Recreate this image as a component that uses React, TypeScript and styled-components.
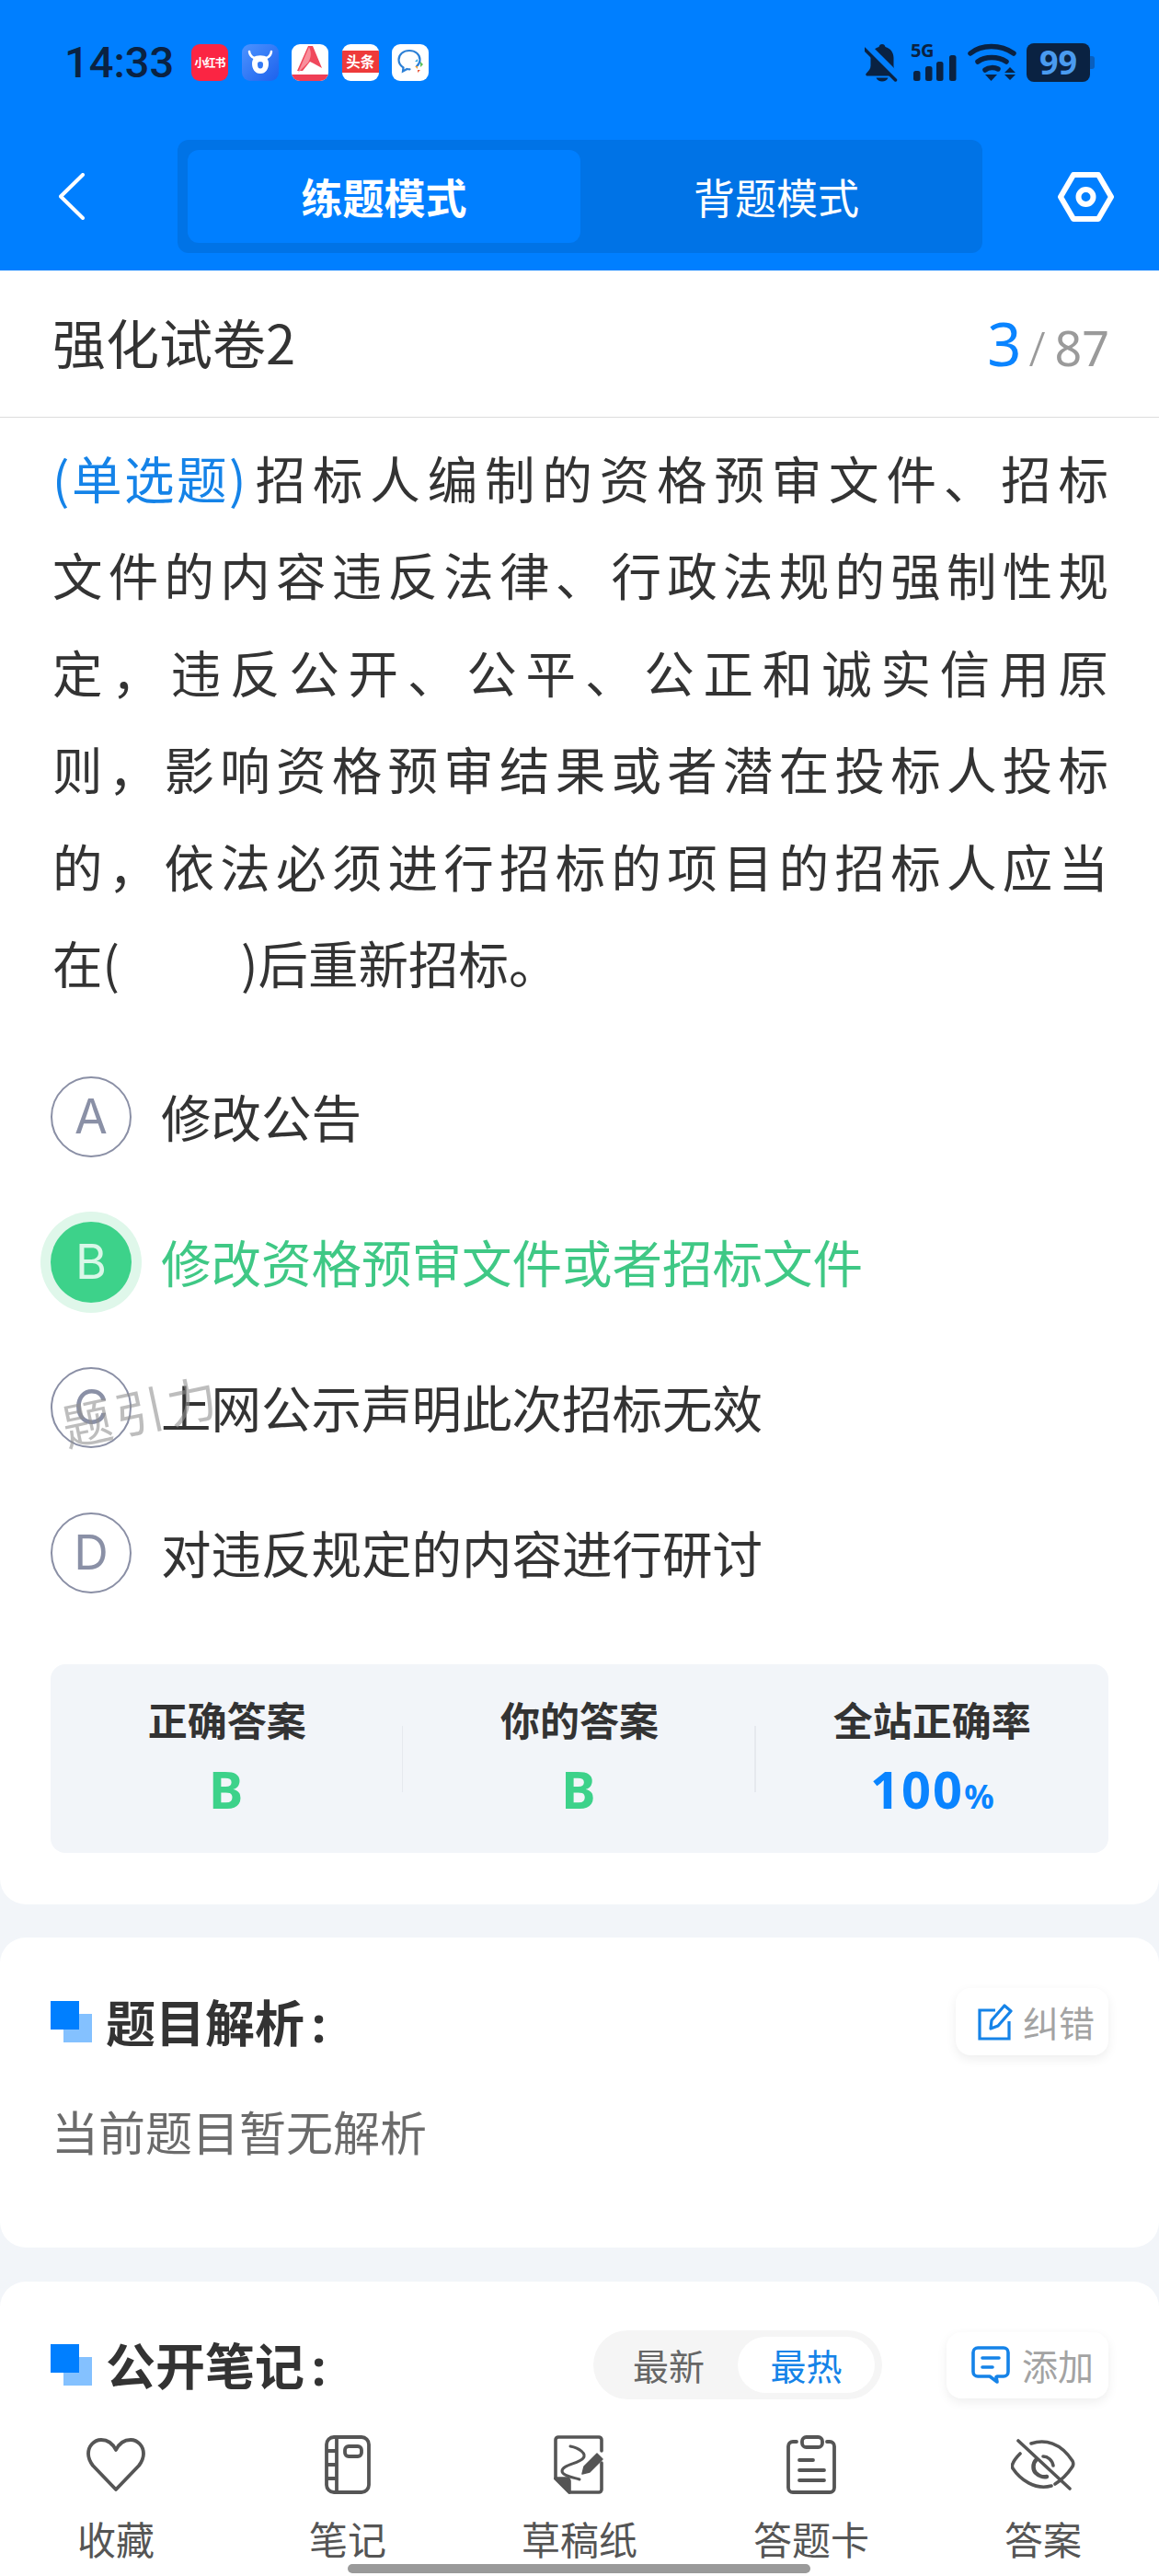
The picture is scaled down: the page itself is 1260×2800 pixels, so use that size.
import React from "react";
import styled, { createGlobalStyle } from "styled-components";

const CJK = `"Noto Sans CJK SC", "Noto Sans", sans-serif`;
const BLUE = "#007fff";
const GREEN = "#3dd28a";
const INK = "#0a2242";

const Global = createGlobalStyle`
  html, body { margin: 0; padding: 0; background: #f2f5f9; }
  * { box-sizing: border-box; }
  #root { width: 1260px; }
`;

const Page = styled.div`
  width: 1260px; height: 2800px; overflow: hidden; position: relative;
  background: #f2f5f9; font-family: ${CJK}; color: #333;
  display: flex; flex-direction: column;
`;

const Header = styled.header`
  height: 294px; background: ${BLUE}; padding: 47px 0 0; flex: none;
`;
const StatusBar = styled.div`
  height: 42px; display: flex; align-items: center; padding: 0 75px 0 70px;
`;
const Clock = styled.div`
  font: 500 47px/42px Roboto, sans-serif; color: ${INK}; width: 138px;
`;
const AppIcons = styled.div` display: flex; gap: 14.6px; `;
const AppTile = styled.div<{ $bg: string }>`
  width: 40px; height: 40px; border-radius: 9px; background: ${p => p.$bg};
  position: relative; overflow: hidden; display: flex; align-items: center; justify-content: center;
`;
const TileText = styled.span`
  font: 700 12px/1 ${CJK}; color: #fff; white-space: nowrap; letter-spacing: -1px;
`;
const ToutiaoBand = styled.div`
  width: 100%; height: 24px; background: #ee3a3a; display: flex; align-items: center; justify-content: center;
  margin-bottom: 2px; font: 700 15.5px/1 ${CJK}; color: #fff;
`;
const StatusRight = styled.div`
  margin-left: auto; display: flex; align-items: center; height: 42px;
`;
const SignalBox = styled.div`
  width: 50px; height: 42px; margin-left: 12px; position: relative; display: flex;
`;
const FiveG = styled.span`
  position: absolute; left: 0; top: 0; font: 700 20px/16px "Noto Sans", sans-serif; letter-spacing: -0.5px; color: ${INK};
`;
const Battery = styled.div`
  width: 69px; height: 42px; border-radius: 8px; background: ${INK}; margin-left: 11px; position: relative;
  color: #4a9bf0; font: 700 36px/41px "Noto Sans", sans-serif; text-align: center;
  &::after { content: ""; position: absolute; right: -5px; top: 14px; width: 5px; height: 14px;
    border-radius: 0 3px 3px 0; background: #0a5fbd; }
`;

const NavBar = styled.div`
  height: 123px; margin-top: 63px; display: flex; align-items: center; position: relative; padding-left: 64px;
`;
const Tabs = styled.div`
  margin-left: 101px; width: 875px; height: 123px; background: #0073e6; border-radius: 12px;
  padding: 11px; display: flex;
`;
const Tab = styled.div<{ $on?: boolean }>`
  width: ${p => (p.$on ? "427px" : "426px")}; height: 101px; border-radius: 12px; display: flex; align-items: center; justify-content: center;
  background: ${p => (p.$on ? BLUE : "transparent")}; color: #fff;
  font: ${p => (p.$on ? 700 : 400)} 45px/1 ${CJK};
`;
const SettingsBtn = styled.div` margin-left: 82px; width: 61px; height: 54px; display: flex; `;

const QuestionCard = styled.section`
  background: #fff; height: 1776px; flex: none; border-radius: 0 0 28px 28px;
`;
const TitleBar = styled.div`
  height: 160px; border-bottom: 1.5px solid #dcdcdc; padding: 0 54px 0 57px;
  display: flex; align-items: center; justify-content: space-between;
`;
const PaperTitle = styled.h1` margin: 0 0 5px; font: 400 58px/1 ${CJK}; color: #333; `;
const Counter = styled.div` display: flex; align-items: baseline; font: 400 52px/1 "Noto Sans", sans-serif; color: #9a9a9a; `;
const CounterNow = styled.span` font-size: 65px; color: #0a84ff; margin-right: 8px; `;
const CounterSlash = styled.span` margin-right: 10px; font-weight: 300; `;

const Question = styled.div` padding: 12px 55px 0 57px; `;
const QLine = styled.div<{ $last?: boolean }>`
  font: 400 54.5px/105.4px ${CJK}; color: #333; height: 105.4px; white-space: normal;
  text-align: ${p => (p.$last ? "left" : "justify")};
  text-align-last: ${p => (p.$last ? "left" : "justify")};
  text-justify: inter-character;
`;
const QType = styled.span` color: #1583e8; display: inline-block; letter-spacing: 2.500px; `;

const Options = styled.div` padding: 72px 0 0 55px; display: flex; flex-direction: column; gap: 70px; `;
const OptionRow = styled.div`
  display: flex; align-items: center; height: 88px; gap: 32px; position: relative;
`;
const OptionBadge = styled.div<{ $on?: boolean }>`
  width: 88px; height: 88px; border-radius: 50%; flex: none;
  display: flex; align-items: center; justify-content: center;
  font: 400 52px/1 Inter, "Noto Sans", sans-serif;
  border: ${p => (p.$on ? "none" : "2.5px solid #8a8fa5")};
  background: ${p => (p.$on ? GREEN : "#fff")};
  color: ${p => (p.$on ? "#d9f7e8" : "#8a90a6")};
  box-shadow: ${p => (p.$on ? "0 0 0 11px #dff7ea" : "none")};
`;
const OptionText = styled.div<{ $on?: boolean }>`
  font: 400 54.5px/1 ${CJK}; color: ${p => (p.$on ? "#3fc885" : "#333")}; padding-bottom: 3px;
`;
const Watermark = styled.div`
  position: absolute; left: 11px; top: 19px; transform: rotate(-12deg);
  font: 400 54px/1 ${CJK}; color: rgba(145,145,145,.6); letter-spacing: 4px; white-space: nowrap;
`;

const Summary = styled.div`
  margin: 77px 55px 0; height: 205px; background: #f2f5f9; border-radius: 16px;
  display: grid; grid-template-columns: repeat(3, 1fr); padding: 33px 0 0;
`;
const SummaryCell = styled.div<{ $div?: boolean }>`
  display: flex; flex-direction: column; align-items: center; position: relative;
  ${p => p.$div ? `&::after { content: ""; position: absolute; right: 0; top: 34px; width: 1.5px; height: 72px; background: #e6e9ee; }` : ""}
`;
const SummaryLabel = styled.div` font: 700 43px/52px ${CJK}; color: #333; `;
const SummaryValue = styled.div<{ $c: string }>`
  font: 700 56px/60px "Noto Sans", sans-serif; color: ${p => p.$c}; margin-top: 20px; letter-spacing: 2px;
`;
const Pct = styled.span` font-size: 36px; letter-spacing: 0; `;

const Panel = styled.section`
  background: #fff; height: 337px; margin-top: 36px; border-radius: 28px; flex: none;
  padding: 55px 55px 0 55px;
`;
const NotesPanel = styled.section`
  background: #fff; flex: 1; margin-top: 37px; border-radius: 28px 28px 0 0;
  display: flex; flex-direction: column; position: relative;
`;
const PanelHead = styled.div`
  display: flex; align-items: center; height: 73px;
`;
const NotesHead = styled(PanelHead)`
  padding: 54px 55px 0; height: 127px;
`;
const HeadMark = styled.div`
  width: 45px; height: 45px; position: relative; flex: none; margin-right: 15px;
  &::before { content: ""; position: absolute; right: 0; bottom: 0; width: 31px; height: 31px; background: #84c1ff; }
  &::after { content: ""; position: absolute; left: 0; top: 0; width: 31px; height: 31px; background: ${BLUE}; }
`;
const HeadTitle = styled.h2` margin: 0; font: 700 54px/1 ${CJK}; color: #333; white-space: nowrap; `;
const Colon = styled.span` font: 700 54px/1 "Noto Sans", sans-serif; margin-left: 8px; `;
const ActionBtn = styled.div`
  margin-left: auto; height: 73px; width: 166px; background: #fff; border-radius: 16px;
  box-shadow: 0 4px 12px rgba(0,0,0,.07); display: flex; align-items: center; gap: 11px; padding-left: 24px;
  font: 400 39px/1 ${CJK}; color: #a3a3a3; flex: none;
`;
const EmptyText = styled.p` margin: 57px 0 0 1px; font: 400 51px/1 ${CJK}; color: #6b6b6b; `;

const SortPill = styled.div`
  margin-left: auto; width: 314px; height: 75px; border-radius: 38px; background: #f5f5f5;
  padding: 7px 8px 7px 7px; display: flex; flex: none;
`;
const SortItem = styled.div<{ $on?: boolean }>`
  width: ${p => (p.$on ? "149px" : "150px")}; height: 61px; border-radius: 31px; display: flex; align-items: center; justify-content: center;
  font: 400 39px/1 ${CJK}; color: ${p => (p.$on ? "#1583e8" : "#666")}; background: ${p => (p.$on ? "#fff" : "transparent")};
`;
const AddBtn = styled(ActionBtn)` margin-left: 70px; width: 176px; height: 72px; padding-left: 27px; gap: 13px; `;

const BottomNav = styled.nav`
  display: grid; grid-template-columns: repeat(5, 1fr); padding-top: 40px;
`;
const NavItem = styled.div`
  display: flex; flex-direction: column; align-items: center;
`;
const NavIcon = styled.div` height: 64px; display: flex; align-items: center; justify-content: center; `;
const NavLabel = styled.div` margin-top: 23px; font: 400 42px/50px ${CJK}; color: #555; `;
const HomeBar = styled.div`
  position: absolute; left: 378px; bottom: 3px; width: 503px; height: 10px; border-radius: 5px; background: #9a9a9a;
`;

const Icon = {
  Rednote: () => <AppTile $bg="#fb2543"><TileText>小红书</TileText></AppTile>,
  Ox: () => (
    <AppTile $bg="linear-gradient(135deg,#4c93ff,#1d62ec)">
      <svg width="40" height="40" viewBox="0 0 40 40">
        <path d="M8 8c.5 4 3 6 5 7 2-1.200 4.500-1.500 7-1.500s5 .3 7 1.500c2-1 4.500-3 5-7" fill="none" stroke="#fff" strokeWidth="2.500" strokeLinecap="round" />
        <path d="M20 13c-6 0-9 3-9 8 0 6 3 11 9 11s9-5 9-11c0-5-3-8-9-8zm0 6c2.500 0 3 1 3 3 0 3-1 4.500-3 4.500s-3-1.500-3-4.500c0-2 .5-3 3-3z" fill="#fff" />
      </svg>
    </AppTile>
  ),
  Study: () => (
    <AppTile $bg="#fff">
      <svg width="40" height="40" viewBox="0 0 40 40">
        <path d="M18 2h5l10 24-9-5-4-2-8 10H6z" fill="#f0485c" />
        <path d="M19 3c3 6 2 12-1 17L7 31z" fill="#f98f9c" />
        <rect x="0" y="33" width="40" height="7" fill="#ef3e55" />
      </svg>
    </AppTile>
  ),
  Toutiao: () => <AppTile $bg="#fff"><ToutiaoBand>头条</ToutiaoBand></AppTile>,
  WeCom: () => (
    <AppTile $bg="#fff">
      <svg width="40" height="40" viewBox="0 0 40 40">
        <path d="M27 24c2.500-2 3.500-4.500 3.500-7C30.500 11 25.500 7 19 7S7.500 11 7.500 17c0 3.500 2 6.500 5 8.500l-.5 4 4.500-2.500c1 .2 2 .3 3 .3" fill="none" stroke="#2b7fd6" strokeWidth="2.200" strokeLinecap="round" />
        <path d="M31 19l3 3-3 3z" fill="#5ac05a" /><path d="M25 19l3-3v3z" fill="#2fa5e0" />
        <path d="M25 24h3v3z" fill="#f2a13a" /><path d="M31 28l-3 3v-3z" fill="#e8593c" />
      </svg>
    </AppTile>
  ),
  Bell: () => (
    <svg width="38" height="42" viewBox="0 0 38 42">
      <path d="M19 1c2 0 3 1 3.500 3C28 5.500 31.500 10 31.500 16v9c0 3 2.500 6 4.500 8 1 1 .5 2.500-1 2.500H3c-1.500 0-2.500-1.500-1-3 2.500-2.500 4.500-5 4.500-8V16C6.500 10 10 5.500 15.500 4 16 2 17 1 19 1z" fill={INK} />
      <path d="M12.500 37.500h13c-1 2.500-3.500 4-6.500 4s-5.500-1.500-6.500-4z" fill={INK} />
      <path d="M0 0l38 38" stroke={BLUE} strokeWidth="7" />
      <path d="M2 3.500l34 34" stroke={INK} strokeWidth="3.500" strokeLinecap="round" transform="translate(-2.500 2.500)" />
    </svg>
  ),
  Signal: () => (
    <SignalBox>
      <FiveG>5G</FiveG>
      <svg width="50" height="42" viewBox="0 0 50 42" fill={INK}>
        <rect x="3" y="30" width="7.500" height="11" rx="2.500" />
        <rect x="16" y="25" width="7.500" height="16" rx="2.500" />
        <rect x="28" y="20" width="7.500" height="21" rx="2.500" />
        <rect x="42" y="13" width="7.500" height="28" rx="2.500" />
      </svg>
    </SignalBox>
  ),
  Wifi: () => (
    <svg width="53" height="42" viewBox="0 0 53 42" fill="none" stroke={INK} strokeWidth="5.500" strokeLinecap="round" style={{ marginLeft: 12 }}>
      <path d="M3 11C15 1 36 1 50 11" />
      <path d="M11 20c8-6 22-6 31 0" />
      <path d="M19 29c4-3 10-3 14 -1" />
      <path d="M19 34h13l-6.500 7z" fill={INK} stroke="none" />
      <path d="M46 26l6 6H40zM40 34h12l-6 6z" fill={INK} stroke="none" />
    </svg>
  ),
  Back: () => (
    <svg width="28" height="51" viewBox="0 0 28 51" fill="none" stroke="#fff" strokeWidth="4" strokeLinecap="round" strokeLinejoin="round">
      <path d="M26 2 2 25.500 26 49" />
    </svg>
  ),
  Settings: () => (
    <svg width="61" height="54" viewBox="0 0 61 54" fill="none" stroke="#fff" strokeWidth="6" strokeLinejoin="round">
      <path d="M17 3h27l14 24-14 24H17L3 27z" />
      <circle cx="30.500" cy="27" r="8" />
    </svg>
  ),
  Edit: () => (
    <svg width="38" height="41" viewBox="0 0 38 41" fill="none" stroke="#1583e8" strokeWidth="3.200" style={{ flex: "none" }}>
      <path d="M19 8H2v31h32V20" />
      <path d="M14 28l1-9L29 3l7 6-14 16z" strokeLinejoin="round" />
    </svg>
  ),
  Comment: () => (
    <svg width="42" height="41" viewBox="0 0 42 41" fill="none" stroke="#1583e8" strokeWidth="3.600" strokeLinecap="round" strokeLinejoin="round" style={{ flex: "none" }}>
      <path d="M7 2h28a5 5 0 0 1 5 5v21a5 5 0 0 1-5 5H28l-1 .5 1 5.500-8-6H7a5 5 0 0 1-5-5V7a5 5 0 0 1 5-5z" />
      <path d="M12 13h18M12 23h11" />
    </svg>
  ),
  Heart: () => (
    <svg width="64" height="58" viewBox="0 0 64 58" fill="none" stroke="#555" strokeWidth="3.800" strokeLinejoin="round">
      <path d="M32 13C28 5 22 2 16 2 8 2 2 9 2 17c0 5 2 9 5 13l25 26 25-26c3-4 5-8 5-13 0-8-6-15-14-15-6 0-12 3-16 11z" />
    </svg>
  ),
  Notebook: () => (
    <svg width="50" height="64" viewBox="0 0 50 64" fill="none" stroke="#555" strokeWidth="3.800" strokeLinejoin="round">
      <rect x="2" y="2" width="46" height="60" rx="8" />
      <path d="M13 2v60M2 17h11M2 32h11M2 47h11" />
      <rect x="22" y="12" width="18" height="11" rx="4" />
    </svg>
  ),
  Sketch: () => (
    <svg width="56" height="64" viewBox="0 0 56 64" fill="none" stroke="#555" strokeWidth="3.600" strokeLinejoin="round" strokeLinecap="round">
      <path d="M52 17V5a3 3 0 0 0-3-3H5a3 3 0 0 0-3 3v42l15 15h32a3 3 0 0 0 3-3V30" />
      <path d="M2 47h12a3 3 0 0 1 3 3v12z" fill="#555" />
      <path d="M18 12c10 2 18 8 14 13-5 6-23 7-23 14 0 5 13 7 19 9" strokeWidth="3" />
      <path d="M31 42l2-8 14-14 6 6-14 14z" fill="#555" strokeWidth="1.500" />
    </svg>
  ),
  Clipboard: () => (
    <svg width="54" height="64" viewBox="0 0 54 64" fill="none" stroke="#555" strokeWidth="3.800" strokeLinecap="round" strokeLinejoin="round">
      <path d="M11 7H7a5 5 0 0 0-5 5v45a5 5 0 0 0 5 5h40a5 5 0 0 0 5-5V12a5 5 0 0 0-5-5h-3" />
      <rect x="17" y="2" width="22" height="11" rx="4.500" />
      <path d="M14 27h15M14 38h27M14 49h27" />
    </svg>
  ),
  EyeOff: () => (
    <svg width="70" height="56" viewBox="-1 -1 70 56" fill="none" stroke="#555" strokeWidth="3.600" strokeLinecap="round" strokeLinejoin="round">
      <path d="M21 4c15-5 32-1 45 19 1 2 1 4 0 6-4 6-11 14-19 19" />
      <path d="M9 15c-4 4-7 8-8 11-1 2-1 3 0 5 8 12 24 24 42 19" />
      <path d="M27 21c-5 5-4 12-1 15 3 3 8 5 12 4" strokeWidth="4.500" />
      <path d="M34 18c5 0 10 4 11 10" />
      <path d="M7 1l56 52" />
    </svg>
  ),
};

const options = [
  { k: "A", t: "修改公告" },
  { k: "B", t: "修改资格预审文件或者招标文件", on: true },
  { k: "C", t: "上网公示声明此次招标无效", mark: true },
  { k: "D", t: "对违反规定的内容进行研讨" },
];

const navItems = [
  { label: "收藏", icon: <Icon.Heart /> },
  { label: "笔记", icon: <Icon.Notebook /> },
  { label: "草稿纸", icon: <Icon.Sketch /> },
  { label: "答题卡", icon: <Icon.Clipboard /> },
  { label: "答案", icon: <Icon.EyeOff /> },
];

export default function App() {
  return (
    <Page>
      <Global />
      <Header>
        <StatusBar>
          <Clock>14:33</Clock>
          <AppIcons>
            <Icon.Rednote /><Icon.Ox /><Icon.Study /><Icon.Toutiao /><Icon.WeCom />
          </AppIcons>
          <StatusRight>
            <Icon.Bell /><Icon.Signal /><Icon.Wifi />
            <Battery>99</Battery>
          </StatusRight>
        </StatusBar>
        <NavBar>
          <Icon.Back />
          <Tabs>
            <Tab $on>练题模式</Tab>
            <Tab>背题模式</Tab>
          </Tabs>
          <SettingsBtn><Icon.Settings /></SettingsBtn>
        </NavBar>
      </Header>

      <QuestionCard>
        <TitleBar>
          <PaperTitle>强化试卷2</PaperTitle>
          <Counter>
            <CounterNow>3</CounterNow><CounterSlash>/</CounterSlash>87
          </Counter>
        </TitleBar>
        <Question>
          <QLine><QType>(单选题)</QType>招标人编制的资格预审文件、招标</QLine>
          <QLine>文件的内容违反法律、行政法规的强制性规</QLine>
          <QLine>定，违反公开、公平、公正和诚实信用原</QLine>
          <QLine>则，影响资格预审结果或者潜在投标人投标</QLine>
          <QLine>的，依法必须进行招标的项目的招标人应当</QLine>
          <QLine $last>在(　　{"\u00a0\u2009"})后重新招标。</QLine>
        </Question>
        <Options>
          {options.map(o => (
            <OptionRow key={o.k}>
              <OptionBadge $on={o.on}>{o.k}</OptionBadge>
              <OptionText $on={o.on}>{o.t}</OptionText>
              {o.mark && <Watermark>题引力</Watermark>}
            </OptionRow>
          ))}
        </Options>
        <Summary>
          <SummaryCell $div>
            <SummaryLabel>正确答案</SummaryLabel>
            <SummaryValue $c={GREEN}>B</SummaryValue>
          </SummaryCell>
          <SummaryCell $div>
            <SummaryLabel>你的答案</SummaryLabel>
            <SummaryValue $c={GREEN}>B</SummaryValue>
          </SummaryCell>
          <SummaryCell>
            <SummaryLabel>全站正确率</SummaryLabel>
            <SummaryValue $c="#0a84ff">100<Pct>%</Pct></SummaryValue>
          </SummaryCell>
        </Summary>
      </QuestionCard>

      <Panel>
        <PanelHead>
          <HeadMark />
          <HeadTitle>题目解析<Colon>:</Colon></HeadTitle>
          <ActionBtn><Icon.Edit />纠错</ActionBtn>
        </PanelHead>
        <EmptyText>当前题目暂无解析</EmptyText>
      </Panel>

      <NotesPanel>
        <NotesHead>
          <HeadMark />
          <HeadTitle>公开笔记<Colon>:</Colon></HeadTitle>
          <SortPill>
            <SortItem>最新</SortItem>
            <SortItem $on>最热</SortItem>
          </SortPill>
          <AddBtn><Icon.Comment />添加</AddBtn>
        </NotesHead>
        <BottomNav>
          {navItems.map(n => (
            <NavItem key={n.label}>
              <NavIcon>{n.icon}</NavIcon>
              <NavLabel>{n.label}</NavLabel>
            </NavItem>
          ))}
        </BottomNav>
      </NotesPanel>
      <HomeBar />
    </Page>
  );
}
